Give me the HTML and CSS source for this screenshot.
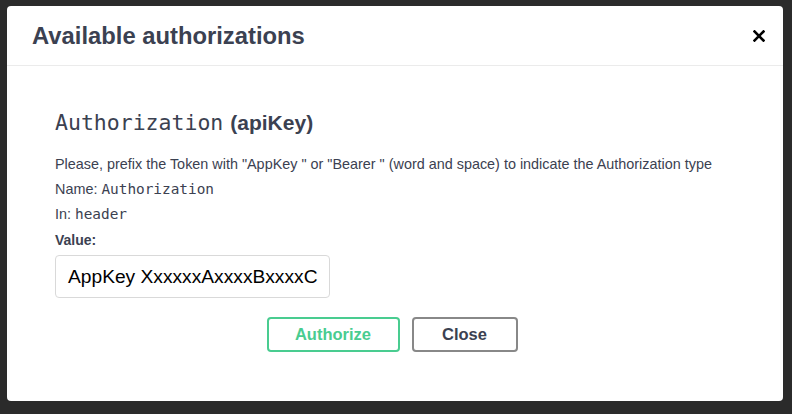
FILE: index.html
```html
<!DOCTYPE html>
<html>
<head>
<meta charset="utf-8">
<link rel="stylesheet" href="styles.css">
</head>
<body>
<div class="backdrop">
  <div class="modal">
    <div class="modal-header">
      <h3 class="modal-title">Available authorizations</h3>
      <button class="close-x" aria-label="close">
        <svg width="12" height="12" viewBox="0 0 12 12"><path d="M1.5 1.5 L10.5 10.5 M10.5 1.5 L1.5 10.5" stroke="#000" stroke-width="2.6" stroke-linecap="square"/></svg>
      </button>
    </div>
    <div class="modal-body">
      <h4 class="auth-title"><code>Authorization</code> <span class="kind">(apiKey)</span></h4>
      <p class="line desc">Please, prefix the Token with "AppKey " or "Bearer " (word and space) to indicate the Authorization type</p>
      <p class="line">Name: <code>Authorization</code></p>
      <p class="line">In: <code>header</code></p>
      <label class="value-label">Value:</label>
      <div class="input">AppKey XxxxxxAxxxxBxxxxC</div>
      <div class="btn-row">
        <button class="btn authorize">Authorize</button>
        <button class="btn close">Close</button>
      </div>
    </div>
  </div>
</div>
</body>
</html>
```
FILE: styles.css
```css
html, body {
  margin: 0;
  padding: 0;
  background: #2b2b2b;
  font-family: "Liberation Sans", Arial, sans-serif;
}
.backdrop {
  width: 792px;
  height: 414px;
  padding: 6px 9px 0 7px;
  box-sizing: border-box;
}
.modal {
  background: #fff;
  border-radius: 4px;
  height: 395px;
  display: flex;
  flex-direction: column;
}
.modal-header {
  height: 60px;
  box-sizing: border-box;
  border-bottom: 1px solid #ebebeb;
  display: flex;
  align-items: center;
  justify-content: space-between;
  padding: 0 18px 0 25px;
}
.modal-title {
  margin: 0;
  font-size: 23.8px;
  font-weight: 700;
  color: #3b4151;
  letter-spacing: 0;
}
.close-x {
  border: 0;
  background: none;
  padding: 0;
  display: flex;
}
.modal-body {
  padding: 44px 48px 0 48px;
  color: #3b4151;
}
.auth-title {
  margin: 0 0 17px 0;
  font-size: 21px;
  font-weight: 400;
  display: flex;
  align-items: baseline;
  gap: 7px;
}
.auth-title code {
  font-family: "DejaVu Sans Mono", monospace;
  font-size: 21.5px;
  letter-spacing: 0;
}
.kind {
  font-family: "Liberation Sans", Arial, sans-serif;
  font-weight: 700;
  font-size: 21px;
}
.line {
  margin: 0;
  font-size: 14.4px;
  line-height: 25px;
}
.line code {
  font-family: "DejaVu Sans Mono", monospace;
  font-size: 14.4px;
}
.value-label {
  display: block;
  margin-top: 3px;
  font-size: 14px;
  font-weight: 700;
  line-height: 20px;
}
.input {
  margin-top: 5px;
  width: 275px;
  height: 43px;
  box-sizing: border-box;
  border: 1px solid #d9d9d9;
  border-radius: 4px;
  padding: 0 12px;
  display: flex;
  align-items: center;
  font-size: 19.2px;
  color: #000;
  white-space: nowrap;
  overflow: hidden;
}
.btn-row {
  display: flex;
  justify-content: center;
  gap: 12px;
  margin-top: 19px;
  padding-right: 6px;
}
.btn {
  height: 35px;
  box-sizing: border-box;
  border-radius: 4px;
  background: #fff;
  font-family: "Liberation Sans", Arial, sans-serif;
  font-weight: 700;
  font-size: 16.5px;
  padding: 0;
}
.authorize {
  width: 133px;
  border: 2px solid #49cc90;
  color: #49cc90;
}
.close {
  width: 106px;
  border: 2px solid #888;
  color: #3b4151;
}
```
